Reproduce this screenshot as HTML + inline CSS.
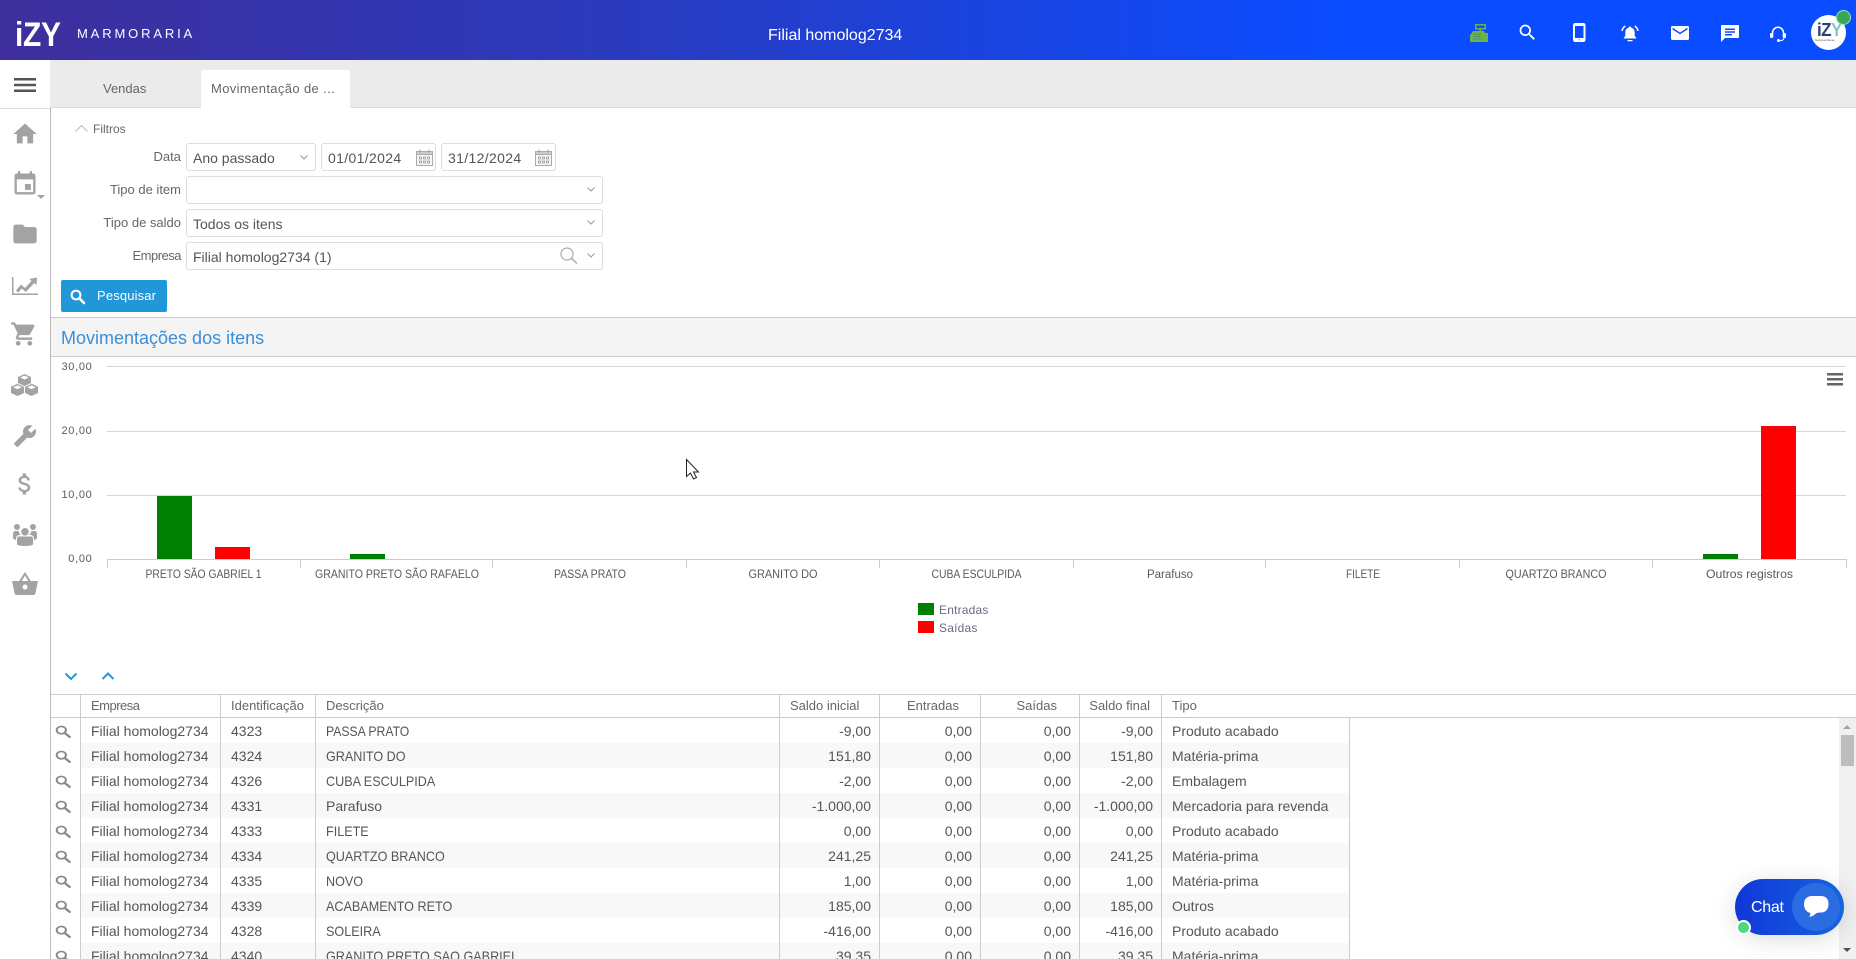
<!DOCTYPE html>
<html lang="pt-BR">
<head>
<meta charset="utf-8">
<title>Movimentação de itens</title>
<style>
*{box-sizing:border-box}
html,body{margin:0;padding:0;width:1856px;height:959px;overflow:hidden;background:#fff;font-family:"Liberation Sans",sans-serif;color:#555}
.a{position:absolute}
.t{position:absolute;white-space:nowrap}
svg{display:block;position:absolute;overflow:visible}
#top{left:0;top:0;width:1856px;height:60px;background:linear-gradient(90deg,#3e2f9c 0,#2b3abd 33%,#0a4cff 72%,#0a4cff 100%)}
.box{position:absolute;height:28px;background:#fff;border:1px solid #ddd;border-radius:3px;font-size:14px;line-height:28px;padding-left:6px;color:#555}
.lab{position:absolute;right:1675px;font-size:13px;line-height:16px;color:#666;white-space:nowrap}
.ic path{fill:#a3a3a3}
table{border-collapse:separate;border-spacing:0;table-layout:fixed;position:absolute;left:51px;top:695px;width:1299px}
th{height:23px;font-weight:normal;font-size:13px;color:#666;text-align:left;padding:0 0 0 10px;border-right:1px solid #ccc;border-bottom:1px solid #ccc;white-space:nowrap;overflow:hidden;line-height:22px}
th:last-child{border-right:0}
td{height:25px;font-size:14px;color:#555;padding:0 0 0 10px;border-right:1px solid #ccc;white-space:nowrap;overflow:hidden}
td.r{text-align:right;padding:0 8px 0 0}
th.r{text-align:right}
tr:nth-child(even) td:not(:first-child){background:#f8f8f8}
td.m{padding:0;position:relative}
.n{display:inline-block;transform:scaleX(.9);transform-origin:0 50%}
</style>
</head>
<body>
<svg width="0" height="0" style="position:absolute"><defs>
<symbol id="lens" viewBox="0 0 16 16" preserveAspectRatio="none"><circle cx="6.3" cy="6.3" r="4.6" fill="none" stroke="#8a8a8a" stroke-width="2"/><path d="M9.8 9.8L14.6 14.6" stroke="#8a8a8a" stroke-width="2.6" stroke-linecap="round"/></symbol>
<symbol id="cal" viewBox="0 0 17 17"><rect x=".5" y="2.5" width="16" height="14" fill="#f6f6f6" stroke="#aaa"/><rect x=".5" y="2.5" width="16" height="3" fill="#ccc" stroke="#aaa"/><path d="M4 .5v3M13 .5v3" stroke="#999"/><path d="M3.5 8h2v2h-2zM7.5 8h2v2h-2zM11.5 8h2v2h-2zM3.5 12h2v2h-2zM7.5 12h2v2h-2zM11.5 12h2v2h-2z" fill="none" stroke="#999" stroke-width=".8"/></symbol>
</defs></svg>

<!-- top bar -->
<div class="a" id="top"></div>
<div class="t" style="left:15px;top:19px;font-size:34px;line-height:32px;font-weight:bold;color:#fff;letter-spacing:-.3px;transform:scaleX(.88);transform-origin:0 50%">iZY</div>
<div class="t" style="left:77px;top:26px;font-size:13px;line-height:16px;color:#fff;letter-spacing:2.85px">MARMORARIA</div>
<div class="t" style="left:768px;top:26px;font-size:16px;line-height:20px;color:#fff">Filial homolog2734</div>

<svg style="left:1470px;top:24px" width="18" height="18" viewBox="0 0 18 18"><path d="M5 0h11v5.500H11.500V7H14l1 2h3V18H0V11.500L3 7h6.500V5.500H5zM6.500 1.500v2.500h8V1.500z" fill="#6cb33f" fill-rule="evenodd"/><path d="M4.500 10h7M4 12.500h7.500M3.500 15h8" stroke="#2f6ea8" stroke-width=".9" stroke-dasharray="1.200 1.200"/></svg>
<svg style="left:1517px;top:22px" width="21" height="21" viewBox="0 0 24 24"><path fill="#fff" d="M15.500 14h-.79l-.28-.27C15.410 12.590 16 11.110 16 9.500 16 5.910 13.090 3 9.500 3S3 5.910 3 9.500 5.910 16 9.500 16c1.610 0 3.090-.59 4.230-1.570l.27.28v.79l5 4.990L20.490 19l-4.990-5zm-6 0C7.010 14 5 11.990 5 9.500S7.010 5 9.500 5 14 7.010 14 9.500 11.990 14 9.500 14z"/></svg>
<svg style="left:1573px;top:23px" width="13" height="19" viewBox="0 0 13 19"><rect x="0" y="0" width="12.500" height="19" rx="2.200" fill="#fff"/><rect x="2" y="3" width="8.500" height="12" fill="#0a4cff"/><rect x="5" y="16.300" width="2.500" height="1" fill="#9ab"/></svg>
<svg style="left:1621px;top:25px" width="18" height="17" viewBox="0 0 18 17"><path fill="#fff" d="M9 1.500c.8 0 1.300.5 1.300 1.200 2.300.6 3.400 2.500 3.400 4.800v3.300L15.500 13.500H2.500L4.300 10.800V7.500c0-2.300 1.100-4.200 3.400-4.800 0-.7.500-1.200 1.300-1.200zM6.500 15h5v1.300h-5z"/><path d="M4.200 1C2.500 2.200 1.400 3.800 1 6M13.800 1c1.700 1.200 2.800 2.800 3.200 5" stroke="#fff" stroke-width="1.600" fill="none"/></svg>
<svg style="left:1671px;top:26px" width="18" height="14" viewBox="0 0 18 14"><rect width="18" height="14" rx="1.500" fill="#fff"/><path d="M1.500 2.500L9 7.500l7.500-5" fill="none" stroke="#0a4cff" stroke-width="1.500"/></svg>
<svg style="left:1721px;top:25px" width="18" height="17" viewBox="0 0 18 17"><path fill="#fff" d="M1 0h16a1 1 0 0 1 1 1v11a1 1 0 0 1-1 1H4l-4 4V1a1 1 0 0 1 1-1z"/><path d="M4 3.500h10v1.500H4zM4 6.200h10v1.500H4zM4 9h7v1.500H4z" fill="#0a4cff"/></svg>
<svg style="left:1770px;top:26px" width="16" height="16" viewBox="0 0 16 16"><path d="M2.500 8V6.800a5.500 5.500 0 0 1 11 0V8" fill="none" stroke="#fff" stroke-width="1.500"/><rect x="0" y="7" width="3.300" height="5" rx="1.500" fill="#fff"/><rect x="12.700" y="7" width="3.300" height="5" rx="1.500" fill="#fff"/><path d="M14 11.500c0 2-1.500 3.200-4.500 3.200" fill="none" stroke="#fff" stroke-width="1"/><circle cx="8.500" cy="14.500" r="1.500" fill="#fff"/></svg>
<div class="a" style="left:1811px;top:15px;width:35px;height:35px;border-radius:50%;background:#fff"></div>
<div class="t" style="left:1817px;top:21px;font-size:18px;line-height:18px;font-weight:bold;letter-spacing:-.6px;color:#27447a;transform:scaleX(.95);transform-origin:0 50%">iZ<span style="color:#86c5cc">Y</span></div>
<div class="t" style="left:1815px;top:38px;font-size:3px;line-height:4px;color:#555">Surpreenda-se</div>
<div class="a" style="left:1836px;top:10px;width:15px;height:15px;border-radius:50%;background:#34a853;border:1px solid #a8d8c0"></div>

<!-- sidebar -->
<div class="a" style="left:0;top:108px;width:50px;height:1px;background:#ddd"></div>
<div class="a" style="left:50px;top:108px;width:1px;height:851px;background:#bbb"></div>
<svg style="left:14px;top:78px" width="22" height="14" viewBox="0 0 22 14"><path d="M0 0h22v2.500H0zM0 5.800h22v2.500H0zM0 11.500h22v2.500H0z" fill="#555"/></svg>
<svg class="ic" style="left:11px;top:120px" width="28" height="28" viewBox="0 0 24 24"><path d="M10 20v-6h4v6h5v-8h3L12 3 2 12h3v8z"/></svg>
<svg class="ic" style="left:11px;top:170px" width="28" height="28" viewBox="0 0 24 24"><path d="M17 12h-5v5h5v-5zM16 1v2H8V1H6v2H5c-1.110 0-1.990.9-1.990 2L3 19c0 1.100.89 2 2 2h14c1.100 0 2-.9 2-2V5c0-1.100-.9-2-2-2h-1V1h-2zm3 18H5V8h14v11z"/></svg>
<svg class="ic" style="left:37px;top:195px" width="8" height="4" viewBox="0 0 8 4"><path d="M0 0h8L4 4z"/></svg>
<svg class="ic" style="left:11px;top:220px" width="28" height="28" viewBox="0 0 24 24"><path d="M10 4H4c-1.100 0-1.990.9-1.990 2L2 18c0 1.100.9 2 2 2h16c1.100 0 2-.9 2-2V8c0-1.100-.9-2-2-2h-8l-2-2z"/></svg>
<svg class="ic" style="left:12px;top:277px" width="26" height="18" viewBox="0 0 26 18"><path d="M0 0h1.500v16.500H26V18H0z"/><path d="M4 13.500l5-6 4 3.500 6.500-7L17.500 2 25 .5 24.500 8l-2.200-2-8.500 9-4-3.500-3.500 4z"/></svg>
<svg class="ic" style="left:10px;top:320px" width="28" height="28" viewBox="0 0 24 24"><path d="M7 18c-1.100 0-1.990.9-1.990 2S5.900 22 7 22s2-.9 2-2-.9-2-2-2zM1 2v2h2l3.600 7.590-1.350 2.450c-.16.28-.25.61-.25.96 0 1.100.9 2 2 2h12v-2H7.420c-.14 0-.25-.11-.25-.25l.03-.12.9-1.630h7.450c.75 0 1.410-.41 1.750-1.030l3.580-6.490c.08-.14.12-.31.12-.48 0-.55-.45-1-1-1H5.210l-.94-2H1zm16 16c-1.100 0-1.990.9-1.990 2s.89 2 1.990 2 2-.9 2-2-.9-2-2-2z"/></svg>
<svg style="left:11px;top:374px" width="27" height="22" viewBox="0 0 27 22"><g fill="#a3a3a3"><path d="M13.500 0l6.500 3v6.500l-6.500 3-6.500-3V3zM6.500 9.800L13 12.800v6.200l-6.500 3L0 19v-6.200zM20.500 9.800L27 12.800v6.200l-6.500 3L14 19v-6.200z"/></g><path d="M13.500 1.600L17.800 3.500 13.500 5.500 9.200 3.500zM6.500 11.400L10.800 13.300 6.500 15.300 2.200 13.300zM20.500 11.400L24.800 13.300 20.500 15.300 16.200 13.300z" fill="#fff"/><path d="M7 9.500l6.500 3 6.500-3M13.500 12.500V20" stroke="#fff" stroke-width=".9" fill="none"/></svg>
<svg class="ic" style="left:13px;top:424px" width="24" height="24" viewBox="0 0 24 24"><g transform="translate(24 0) scale(-1 1)"><path d="M22.700 19l-9.100-9.100c.9-2.300.4-5-1.500-6.900-2-2-5-2.400-7.400-1.300L9 6 6 9 1.600 4.700C.4 7.100.9 10.100 2.900 12.100c1.900 1.900 4.600 2.400 6.900 1.500l9.100 9.100c.4.400 1 .4 1.400 0l2.300-2.300c.5-.4.5-1.100.1-1.400z"/></g></svg>
<svg class="ic" style="left:11px;top:470px" width="28" height="28" viewBox="0 0 24 24"><path d="M11.800 10.900c-2.270-.59-3-1.200-3-2.150 0-1.090 1.010-1.850 2.700-1.850 1.780 0 2.440.85 2.500 2.100h2.210c-.07-1.720-1.120-3.300-3.210-3.810V3h-3v2.160c-1.940.42-3.500 1.680-3.500 3.610 0 2.310 1.910 3.460 4.700 4.130 2.500.6 3 1.480 3 2.410 0 .69-.49 1.790-2.700 1.790-2.060 0-2.870-.92-2.980-2.100h-2.200c.12 2.190 1.760 3.420 3.680 3.830V21h3v-2.150c1.950-.37 3.500-1.500 3.500-3.550 0-2.840-2.430-3.810-4.700-4.400z"/></svg>
<svg class="ic" style="left:13px;top:524px" width="24" height="22" viewBox="0 0 24 22"><path d="M12 4a3.800 3.800 0 1 1 0 7.600A3.800 3.800 0 0 1 12 4zM4 0a3 3 0 1 1 0 6 3 3 0 0 1 0-6zM20 0a3 3 0 1 1 0 6 3 3 0 0 1 0-6zM6 12.500h12c1.500 0 2 1 2 2.500v5c0 1.200-2.500 2-8 2s-8-.8-8-2v-5c0-1.500.5-2.500 2-2.500zM0 9.500C0 8 1 7 2.500 7h3c.4 1.500 1.200 2.800 2.300 3.500C4.500 11 3 12.500 3 14.500V16C1 15.500 0 14.700 0 14zM24 9.500C24 8 23 7 21.500 7h-3c-.4 1.500-1.200 2.800-2.300 3.500C19.500 11 21 12.500 21 14.500V16c2-.5 3-1.300 3-2z"/></svg>
<svg class="ic" style="left:12px;top:572px" width="26" height="23" viewBox="0 0 26 23"><path fill-rule="evenodd" d="M13 0l5.800 9H26l-2.500 12c-.2 1.200-1 2-2.200 2H4.700c-1.200 0-2-.8-2.200-2L0 9h7.200zM13 3.500L9.800 9h6.400zM13 12.500a2.500 2.500 0 1 0 0 5 2.500 2.500 0 0 0 0-5z"/></svg>

<!-- tabs -->
<div class="a" style="left:50px;top:60px;width:1806px;height:48px;background:#ebebeb;border-bottom:1px solid #ddd"></div>
<div class="a" style="left:201px;top:70px;width:149px;height:39px;background:#fff;border-radius:2px 2px 0 0"></div>
<div class="t" style="left:103px;top:81px;font-size:13px;line-height:16px;color:#666">Vendas</div>
<div class="t" style="left:211px;top:81px;font-size:13px;line-height:16px;color:#666;letter-spacing:.37px">Movimentação de ...</div>

<!-- filters -->
<svg style="left:75px;top:125px" width="13" height="7" viewBox="0 0 13 7"><path d="M.5 6.500l6-6 6 6" fill="none" stroke="#bbb"/></svg>
<div class="t" style="left:93px;top:121px;font-size:12px;line-height:16px;color:#666">Filtros</div>
<div class="lab" style="top:149px">Data</div>
<div class="lab" style="top:182px">Tipo de item</div>
<div class="lab" style="top:215px">Tipo de saldo</div>
<div class="lab" style="top:248px;letter-spacing:-.5px">Empresa</div>

<div class="box" style="left:186px;top:143px;width:130px">Ano passado</div>
<div class="box" style="left:321px;top:143px;width:115px;letter-spacing:.35px">01/01/2024</div>
<div class="box" style="left:441px;top:143px;width:115px;letter-spacing:.35px">31/12/2024</div>
<div class="box" style="left:186px;top:176px;width:417px"></div>
<div class="box" style="left:186px;top:209px;width:417px">Todos os itens</div>
<div class="box" style="left:186px;top:242px;width:417px">Filial homolog2734 (1)</div>
<svg style="left:300px;top:155px" width="8" height="5" viewBox="0 0 8 5"><path d="M.5.5L4 4 7.500.5" fill="none" stroke="#999"/></svg>
<svg style="left:416px;top:149px" width="17" height="17"><use href="#cal"/></svg>
<svg style="left:535px;top:149px" width="17" height="17"><use href="#cal"/></svg>
<svg style="left:587px;top:187px" width="8" height="5" viewBox="0 0 8 5"><path d="M.5.5L4 4 7.500.5" fill="none" stroke="#999"/></svg>
<svg style="left:587px;top:220px" width="8" height="5" viewBox="0 0 8 5"><path d="M.5.5L4 4 7.500.5" fill="none" stroke="#999"/></svg>
<svg style="left:587px;top:253px" width="8" height="5" viewBox="0 0 8 5"><path d="M.5.5L4 4 7.500.5" fill="none" stroke="#999"/></svg>
<svg style="left:560px;top:247px" width="18" height="17" viewBox="0 0 18 17"><circle cx="7" cy="7" r="6" fill="none" stroke="#aaa" stroke-width="1.200"/><path d="M11.300 11.300L17 16.500" stroke="#aaa" stroke-width="1.500"/></svg>

<div class="a" style="left:61px;top:280px;width:106px;height:32px;background:#2196d9;border-radius:2px"></div>
<svg style="left:70px;top:289px" width="15" height="15" viewBox="0 0 15 15"><circle cx="6" cy="6" r="4.400" fill="none" stroke="#fff" stroke-width="2"/><path d="M9.500 9.500L14 14" stroke="#fff" stroke-width="2.600" stroke-linecap="round"/></svg>
<div class="t" style="left:97px;top:288px;font-size:13px;line-height:16px;color:#fff;letter-spacing:.15px">Pesquisar</div>

<!-- panel title -->
<div class="a" style="left:51px;top:317px;width:1805px;height:40px;background:#f4f4f4;border-top:1px solid #ccc;border-bottom:1px solid #ccc"></div>
<div class="t" style="left:61px;top:327px;font-size:18px;line-height:22px;color:#3a8fd8">Movimentações dos itens</div>

<!-- chart -->
<svg style="left:0;top:0" width="1856" height="700" viewBox="0 0 1856 700" font-family="Liberation Sans, sans-serif">
<path d="M107 366.500H1846M107 431.500H1846M107 495.500H1846" stroke="#d6d6d6" fill="none"/>
<path d="M107 559.500H1847M107.500 559v9M300.500 559v9M492.500 559v9M686.500 559v9M879.500 559v9M1073.500 559v9M1265.500 559v9M1459.500 559v9M1652.500 559v9M1846.500 559v9" stroke="#c0d0e0" fill="none"/>
<g fill="#5a5a5a" font-size="11" letter-spacing=".7" text-anchor="end"><text x="92.500" y="370">30,00</text><text x="92.500" y="434">20,00</text><text x="92.500" y="498">10,00</text><text x="92.500" y="562">0,00</text></g>
<rect x="157" y="496" width="35" height="63" fill="#008000"/>
<rect x="215" y="547" width="35" height="12" fill="#f00"/>
<rect x="350" y="554" width="35" height="5" fill="#008000"/>
<rect x="1703" y="554" width="35" height="5" fill="#008000"/>
<rect x="1761" y="426" width="35" height="133" fill="#f00"/>
<g fill="#5a5a5a" font-size="11.500" text-anchor="middle">
<text x="203.500" y="578" textLength="116" lengthAdjust="spacingAndGlyphs">PRETO SÃO GABRIEL 1</text>
<text x="397" y="578" textLength="164" lengthAdjust="spacingAndGlyphs">GRANITO PRETO SÃO RAFAELO</text>
<text x="590" y="578" textLength="72" lengthAdjust="spacingAndGlyphs">PASSA PRATO</text>
<text x="783" y="578" textLength="69" lengthAdjust="spacingAndGlyphs">GRANITO DO</text>
<text x="976.500" y="578" textLength="90" lengthAdjust="spacingAndGlyphs">CUBA ESCULPIDA</text>
<text x="1170" y="578" textLength="46" lengthAdjust="spacingAndGlyphs">Parafuso</text>
<text x="1363" y="578" textLength="34" lengthAdjust="spacingAndGlyphs">FILETE</text>
<text x="1556" y="578" textLength="101" lengthAdjust="spacingAndGlyphs">QUARTZO BRANCO</text>
<text x="1749.500" y="578" textLength="87" lengthAdjust="spacingAndGlyphs">Outros registros</text>
</g>
<path d="M1827 373h16v2.500h-16zM1827 378h16v2.500h-16zM1827 383h16v2.500h-16z" fill="#666"/>
<rect x="918" y="603" width="16" height="12" fill="#008000"/>
<rect x="918" y="621" width="16" height="12" fill="#f00"/>
<g fill="#666d80" font-size="12" letter-spacing=".2"><text x="939" y="614">Entradas</text><text x="939" y="632">Saídas</text></g>
<path d="M686.500 459.500v17l4-3.500 3 6 3-1.500-3-5.500h5z" fill="#fff" stroke="#222" stroke-width="1"/>
<path d="M65.500 673.500l5.500 5.500 5.500-5.500" fill="none" stroke="#2196d9" stroke-width="2"/>
<path d="M102.500 679l5.500-5.500 5.500 5.500" fill="none" stroke="#2196d9" stroke-width="2"/>
</svg>

<!-- grid -->
<div class="a" style="left:51px;top:694px;width:1805px;height:1px;background:#ccc"></div>
<div class="a" style="left:1350px;top:717px;width:506px;height:1px;background:#ccc"></div>
<div class="a" style="left:51px;top:695px;width:1805px;height:264px;overflow:hidden">
<table style="left:0;top:0">
<colgroup><col style="width:30px"><col style="width:140px"><col style="width:95px"><col style="width:464px"><col style="width:100px"><col style="width:101px"><col style="width:99px"><col style="width:82px"><col style="width:188px"></colgroup>
<thead><tr>
<th></th><th style="letter-spacing:-.5px">Empresa</th><th>Identificação</th><th>Descrição</th>
<th class="r" style="padding-right:21px">Saldo inicial</th><th class="r" style="padding-right:21px">Entradas</th><th class="r" style="padding-right:22px">Saídas</th><th class="r" style="padding:0 11px 0 0">Saldo final</th><th>Tipo</th>
</tr></thead>
<tbody>
<tr><td class="m"><svg style="left:4px;top:7px" width="16" height="13"><use href="#lens"/></svg></td><td>Filial homolog2734</td><td>4323</td><td><span class="n" style="transform:scaleX(.87)">PASSA PRATO</span></td><td class="r">-9,00</td><td class="r">0,00</td><td class="r">0,00</td><td class="r">-9,00</td><td>Produto acabado</td></tr>
<tr><td class="m"><svg style="left:4px;top:7px" width="16" height="13"><use href="#lens"/></svg></td><td>Filial homolog2734</td><td>4324</td><td><span class="n">GRANITO DO</span></td><td class="r">151,80</td><td class="r">0,00</td><td class="r">0,00</td><td class="r">151,80</td><td>Matéria-prima</td></tr>
<tr><td class="m"><svg style="left:4px;top:7px" width="16" height="13"><use href="#lens"/></svg></td><td>Filial homolog2734</td><td>4326</td><td><span class="n">CUBA ESCULPIDA</span></td><td class="r">-2,00</td><td class="r">0,00</td><td class="r">0,00</td><td class="r">-2,00</td><td>Embalagem</td></tr>
<tr><td class="m"><svg style="left:4px;top:7px" width="16" height="13"><use href="#lens"/></svg></td><td>Filial homolog2734</td><td>4331</td><td>Parafuso</td><td class="r">-1.000,00</td><td class="r">0,00</td><td class="r">0,00</td><td class="r">-1.000,00</td><td>Mercadoria para revenda</td></tr>
<tr><td class="m"><svg style="left:4px;top:7px" width="16" height="13"><use href="#lens"/></svg></td><td>Filial homolog2734</td><td>4333</td><td><span class="n">FILETE</span></td><td class="r">0,00</td><td class="r">0,00</td><td class="r">0,00</td><td class="r">0,00</td><td>Produto acabado</td></tr>
<tr><td class="m"><svg style="left:4px;top:7px" width="16" height="13"><use href="#lens"/></svg></td><td>Filial homolog2734</td><td>4334</td><td><span class="n">QUARTZO BRANCO</span></td><td class="r">241,25</td><td class="r">0,00</td><td class="r">0,00</td><td class="r">241,25</td><td>Matéria-prima</td></tr>
<tr><td class="m"><svg style="left:4px;top:7px" width="16" height="13"><use href="#lens"/></svg></td><td>Filial homolog2734</td><td>4335</td><td><span class="n">NOVO</span></td><td class="r">1,00</td><td class="r">0,00</td><td class="r">0,00</td><td class="r">1,00</td><td>Matéria-prima</td></tr>
<tr><td class="m"><svg style="left:4px;top:7px" width="16" height="13"><use href="#lens"/></svg></td><td>Filial homolog2734</td><td>4339</td><td><span class="n">ACABAMENTO RETO</span></td><td class="r">185,00</td><td class="r">0,00</td><td class="r">0,00</td><td class="r">185,00</td><td>Outros</td></tr>
<tr><td class="m"><svg style="left:4px;top:7px" width="16" height="13"><use href="#lens"/></svg></td><td>Filial homolog2734</td><td>4328</td><td><span class="n">SOLEIRA</span></td><td class="r">-416,00</td><td class="r">0,00</td><td class="r">0,00</td><td class="r">-416,00</td><td>Produto acabado</td></tr>
<tr><td class="m"><svg style="left:4px;top:7px" width="16" height="13"><use href="#lens"/></svg></td><td>Filial homolog2734</td><td>4340</td><td><span class="n">GRANITO PRETO SAO GABRIEL</span></td><td class="r">39,35</td><td class="r">0,00</td><td class="r">0,00</td><td class="r">39,35</td><td>Matéria-prima</td></tr>
</tbody>
</table>
</div>

<!-- scrollbar -->
<div class="a" style="left:1839px;top:718px;width:17px;height:241px;background:#f0f0f0"></div>
<div class="a" style="left:1841px;top:735px;width:13px;height:31px;background:#bdbdbd"></div>
<svg style="left:1843px;top:725px" width="8" height="4" viewBox="0 0 8 4"><path d="M4 0l4 4H0z" fill="#a3a3a3"/></svg>
<svg style="left:1843px;top:948px" width="8" height="4" viewBox="0 0 8 4"><path d="M0 0h8L4 4z" fill="#505050"/></svg>

<!-- chat -->
<div class="a" style="left:1735px;top:879px;width:109px;height:56px;border-radius:28px;background:linear-gradient(90deg,#1136d8,#1565e0);box-shadow:0 4px 24px rgba(0,0,0,.14)"></div>
<div class="a" style="left:1792px;top:883px;width:48px;height:48px;border-radius:50%;background:#2b6ce2"></div>
<div class="t" style="left:1751px;top:898px;font-size:16px;line-height:20px;color:#fff;letter-spacing:-.3px">Chat</div>
<svg style="left:1804px;top:896px" width="25" height="23" viewBox="0 0 25 23"><path d="M8 0h9c4.500 0 7.500 2.500 7.500 8s-3 8.500-7.500 8.500c-2.500 0-5 .3-6.800 2.500-1.500 1-3.500 1.800-5 2 1-1 1.300-2.500 1-4C2.500 16 0 13 0 8 0 3 3.500 0 8 0z" fill="#fff"/></svg>
<div class="a" style="left:1736px;top:920px;width:15px;height:15px;border-radius:50%;background:#4cd97f;border:2px solid #fff"></div>
</body>
</html>
